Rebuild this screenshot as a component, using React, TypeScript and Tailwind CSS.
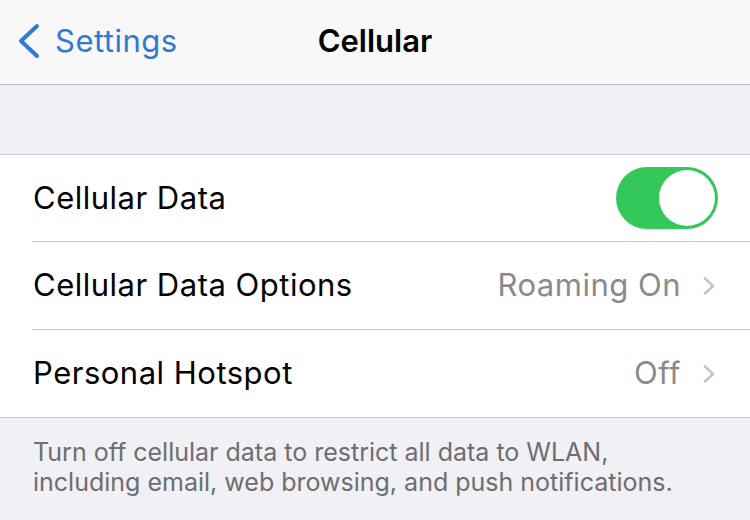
const rows = [
  { label: 'Cellular Data Options', value: 'Roaming On' },
  { label: 'Personal Hotspot', value: 'Off' },
];

const Chevron = () => (
  <svg width="14" height="20" viewBox="0 0 14 20" fill="none" className="ml-[21px] text-[#c4c4c7]">
    <path d="M3 2.5 L11 10 L3 17.5" stroke="currentColor" strokeWidth="2.6" strokeLinecap="round" strokeLinejoin="round" />
  </svg>
);

const App = () => {
  return (
    <div className="w-[750px] h-[520px] bg-[#f0f0f5] font-['Inter',sans-serif] overflow-hidden">
      {/* nav bar */}
      <div className="h-[85px] bg-[#f8f8f8] border-b border-[#bcbcc0] grid grid-cols-[1fr_auto_1fr] items-center">
        <div className="flex items-center pl-[16px] text-[#2f7ad6] -mt-[2px]">
          <svg width="26" height="36" viewBox="0 0 26 36" fill="none">
            <path d="M21 3 L5 18 L21 33" stroke="currentColor" strokeWidth="4" strokeLinecap="round" strokeLinejoin="round" />
          </svg>
          <span className="ml-[13px] text-[31px] tracking-[0.5px]">Settings</span>
        </div>
        <div className="text-[31px] font-semibold text-black -mt-[2px]">Cellular</div>
        <div />
      </div>

      <div className="h-[69px]" />

      {/* list */}
      <div className="bg-white border-t border-b border-[#c8c7cc]">
        <div className="flex items-center h-[86px] pl-[33px] pr-[32px]">
          <span className="text-[31px] tracking-[0.5px] text-black flex-1">Cellular Data</span>
          <div className="w-[102px] h-[62px] rounded-full bg-[#34c759] p-[3px] flex justify-end">
            <div className="w-[56px] h-[56px] rounded-full bg-white" />
          </div>
        </div>
        {rows.map((r) => (
          <div key={r.label} className="ml-[32px] border-t border-[#c8c7cc] flex items-center h-[88px] pr-[34px]">
            <span className="pl-[1px] text-[31px] tracking-[0.5px] text-black flex-1">{r.label}</span>
            <span className="text-[31px] tracking-[0.5px] text-[#8a8a8e]">{r.value}</span>
            <Chevron />
          </div>
        ))}
      </div>

      <p className="px-[33px] pt-[19px] text-[25px] leading-[30px] text-[#6d6d72]">
        Turn off cellular data to restrict all data to WLAN,
        <br />
        including email, web browsing, and push notifications.
      </p>
    </div>
  );
};

export default App;
